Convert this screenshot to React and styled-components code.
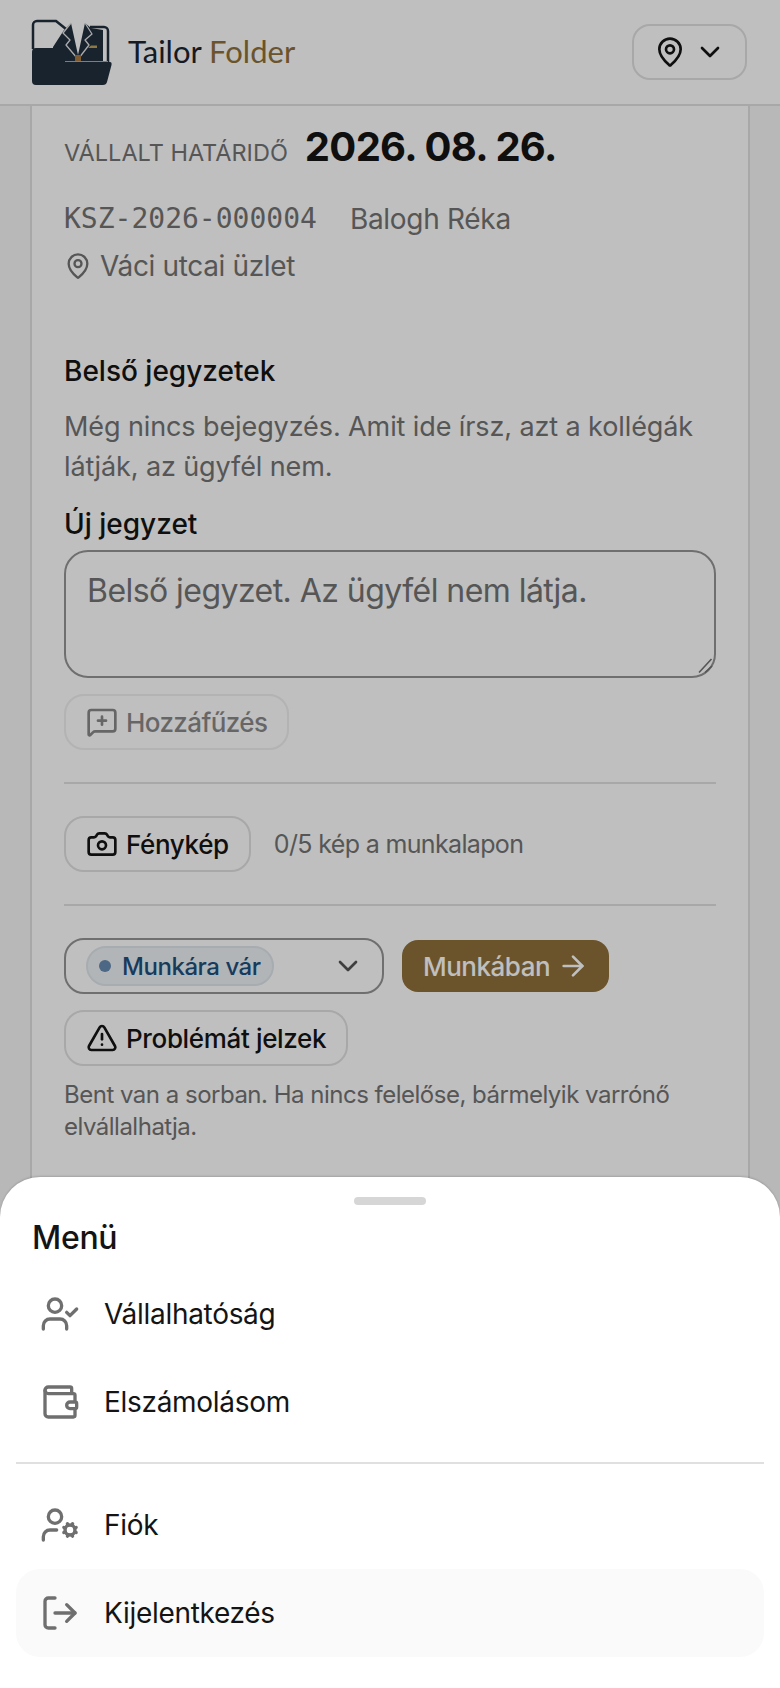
import React from 'react';
import styled, { createGlobalStyle } from 'styled-components';
import {
    ArrowRight,
    Camera,
    ChevronDown,
    LogOut,
    MapPin,
    MessageSquarePlus,
    TriangleAlert,
    UserCheck,
    UserCog,
    Wallet
} from 'lucide-react';

const colors = {
    INK: '#141414',
    MUTED: '#737373',
    LINE: '#e0e0e0',
    FIELD: '#949494',
    BRONZE: '#8f6f3a',
    NAVY: '#1f4f7d'
}

const menuGroups = [
    [
        { label: 'Vállalhatóság', Icon: UserCheck },
        { label: 'Elszámolásom', Icon: Wallet }
    ],
    [
        { label: 'Fiók', Icon: UserCog },
        { label: 'Kijelentkezés', Icon: LogOut, active: true }
    ]
]

const Logo = () => (
    <svg width="88" height="72" viewBox="0 0 88 72">
        <path d="M5 33V9a4 4 0 0 1 4-4h19l10 8" fill="none" stroke="#222f3e" strokeWidth="2.5" />
        <path d="M62 11h14a4 4 0 0 1 4 4v34" fill="none" stroke="#222f3e" strokeWidth="2.5" />
        <path d="M25 31L36 14l7-7 7 32 7-32 6 5 12 2v36H25z" fill="#222f3e" />
        <path d="M4 36q0-4 4-4h17l3-2 9 16h45q2 0 1.5 3L79 66q-.8 3-4 3H8q-4 0-4-4z" fill="#222f3e" />
        <path d="M43 7l-8 10 7 7-4 5 11 13" fill="none" stroke="#e4e4e4" strokeWidth="1.3" strokeLinejoin="round" />
        <path d="M57 7l7 11-7 6 4 5-10 13" fill="none" stroke="#e4e4e4" strokeWidth="1.3" strokeLinejoin="round" />
        <path d="M37 45.5h43" stroke="#a8a8a8" strokeWidth="1.2" />
        <path d="M60 32l3-2.5h6v2.500z" fill="#b8a25c" />
        <rect x="47" y="39" width="6" height="6" fill="#ab7a42" />
    </svg>
)

const App = () => (
    <Screen>
        <GlobalStyle />
        <Header>
            <Brand>
                <Logo />
                <BrandName>Tailor <BrandAccent>Folder</BrandAccent></BrandName>
            </Brand>
            <LocationButton>
                <MapPin size={32} strokeWidth={2} />
                <ChevronDown size={32} strokeWidth={2} />
            </LocationButton>
        </Header>
        <Page>
            <Card>
                <DeadlineRow>
                    <DeadlineLabel>VÁLLALT HATÁRIDŐ</DeadlineLabel>
                    <DeadlineDate>2026. 08. 26.</DeadlineDate>
                </DeadlineRow>
                <MetaRow>
                    <OrderCode>KSZ-2026-000004</OrderCode>
                    <span>Balogh Réka</span>
                </MetaRow>
                <ShopRow>
                    <MapPin size={28} strokeWidth={2} />
                    <span>Váci utcai üzlet</span>
                </ShopRow>

                <SectionTitle>Belső jegyzetek</SectionTitle>
                <SectionText>Még nincs bejegyzés. Amit ide írsz, azt a kollégák látják, az ügyfél nem.</SectionText>
                <FieldLabel htmlFor="note">Új jegyzet</FieldLabel>
                <NoteField>
                    <NoteInput id="note" placeholder="Belső jegyzet. Az ügyfél nem látja." />
                    <ResizeGrip width="16" height="16" viewBox="0 0 16 16">
                        <path d="M1 14.500L13.500 1M7 14.500l7-6.500" stroke="#727272" strokeWidth="1.600" fill="none" />
                    </ResizeGrip>
                </NoteField>
                <ActionButton disabled>
                    <MessageSquarePlus size={32} strokeWidth={2} />
                    Hozzáfűzés
                </ActionButton>

                <Divider />

                <PhotoRow>
                    <ActionButton>
                        <Camera size={32} strokeWidth={2} />
                        Fénykép
                    </ActionButton>
                    <PhotoCount>0/5 kép a munkalapon</PhotoCount>
                </PhotoRow>

                <Divider />

                <StatusRow>
                    <StatusSelect>
                        <StatusPill>
                            <StatusDot />
                            Munkára vár
                        </StatusPill>
                        <ChevronDown size={32} strokeWidth={2} color="#555" />
                    </StatusSelect>
                    <NextButton>
                        Munkában
                        <ArrowRight size={32} strokeWidth={2} />
                    </NextButton>
                </StatusRow>
                <ActionButton>
                    <TriangleAlert size={32} strokeWidth={2} />
                    Problémát jelzek
                </ActionButton>
                <HelpText>Bent van a sorban. Ha nincs felelőse, bármelyik varrónő elvállalhatja.</HelpText>
            </Card>
        </Page>
        <Backdrop />
        <Sheet>
            <Handle />
            <SheetTitle>Menü</SheetTitle>
            {menuGroups.map((group, i) => (
                <MenuGroup key={i} $separated={i > 0}>
                    {group.map(({ label, Icon, active }) => (
                        <MenuItem key={label} $active={active}>
                            <Icon size={40} strokeWidth={2} color="#6f6f6f" />
                            {label}
                        </MenuItem>
                    ))}
                </MenuGroup>
            ))}
        </Sheet>
    </Screen>
)

const GlobalStyle = createGlobalStyle`
    html, body {
        margin: 0;
        padding: 0;
    }
    body {
        font-family: Inter, "Noto Sans", sans-serif;
        color: ${colors.INK};
    }
    * {
        box-sizing: border-box;
    }
`

const Screen = styled.div`
    position: relative;
    width: 780px;
    height: 1688px;
    overflow: hidden;
    background: #f6f6f6;
`

const Header = styled.header`
    height: 106px;
    display: flex;
    align-items: center;
    justify-content: space-between;
    padding: 0 33px 0 28px;
    background: #fff;
    border-bottom: 2px solid ${colors.LINE};
`

const Brand = styled.div`
    display: flex;
    align-items: center;
    gap: 12px;
`

const BrandName = styled.span`
    margin-bottom: 3px;
    font-family: Lato, sans-serif;
    font-size: 31px;
    font-weight: 400;
    color: #1c2530;
`

const BrandAccent = styled.span`
    color: ${colors.BRONZE};
`

const LocationButton = styled.button`
    width: 115px;
    height: 56px;
    display: flex;
    align-items: center;
    justify-content: center;
    gap: 8px;
    padding: 0;
    background: transparent;
    color: ${colors.INK};
    border: 2px solid ${colors.LINE};
    border-radius: 18px;
`

const Page = styled.main`
    padding: 0 30px;
`

const Card = styled.section`
    display: flex;
    flex-direction: column;
    align-items: flex-start;
    height: 1400px;
    padding: 16px 32px;
    background: #fff;
    border-left: 2px solid ${colors.LINE};
    border-right: 2px solid ${colors.LINE};
`

const DeadlineRow = styled.div`
    display: flex;
    align-items: baseline;
    gap: 17px;
    height: 48px;
`

const DeadlineLabel = styled.span`
    font-size: 23.5px;
    color: ${colors.MUTED};
`

const DeadlineDate = styled.span`
    font-size: 40px;
    font-weight: 700;
    letter-spacing: -0.7px;
    color: ${colors.INK};
`

const MetaRow = styled.div`
    display: flex;
    align-items: center;
    gap: 33px;
    margin-top: 29px;
    font-size: 28px;
    letter-spacing: -0.3px;
    line-height: 40px;
    color: ${colors.MUTED};
`

const OrderCode = styled.span`
    font-family: "DejaVu Sans Mono", monospace;
    font-size: 28px;
    letter-spacing: 0;
`

const ShopRow = styled.div`
    display: flex;
    align-items: center;
    gap: 8px;
    margin-top: 7px;
    font-size: 28px;
    letter-spacing: -0.35px;
    line-height: 40px;
    color: ${colors.MUTED};
`

const SectionTitle = styled.h3`
    margin: 65px 0 0;
    font-size: 28px;
    font-weight: 500;
    line-height: 40px;
`

const SectionText = styled.p`
    margin: 16px 0 0;
    font-size: 27px;
    letter-spacing: -0.1px;
    line-height: 40px;
    color: ${colors.MUTED};
`

const FieldLabel = styled.label`
    margin-top: 17px;
    font-size: 28px;
    font-weight: 500;
    line-height: 40px;
`

const NoteField = styled.div`
    position: relative;
    width: 100%;
    height: 128px;
    margin-top: 6px;
`

const NoteInput = styled.textarea`
    display: block;
    width: 100%;
    height: 100%;
    padding: 17px 21px;
    font-family: Inter, sans-serif;
    font-size: 32px;
    letter-spacing: -0.55px;
    line-height: 44px;
    background: transparent;
    border: 2px solid ${colors.FIELD};
    border-radius: 24px;
    resize: none;
    &::placeholder {
        color: ${colors.MUTED};
        opacity: 1;
    }
`

const ResizeGrip = styled.svg`
    position: absolute;
    right: 2px;
    bottom: 4px;
`

const ActionButton = styled.button`
    display: inline-flex;
    align-items: center;
    gap: 8px;
    height: 56px;
    margin-top: ${({ disabled }) => disabled ? '16px' : '0'};
    padding: 0 20px;
    font-family: Inter, sans-serif;
    font-size: 26px;
    font-weight: 500;
    letter-spacing: ${({ disabled }) => disabled ? '-0.6px' : '-0.35px'};
    color: ${colors.INK};
    background: transparent;
    border: 2px solid ${colors.LINE};
    border-radius: 20px;
    opacity: ${({ disabled }) => disabled ? 0.5 : 1};
`

const Divider = styled.hr`
    width: 100%;
    margin: 32px 0;
    border: 0;
    border-top: 2px solid ${colors.LINE};
`

const PhotoRow = styled.div`
    display: flex;
    align-items: center;
    gap: 23px;
`

const PhotoCount = styled.span`
    font-size: 25px;
    letter-spacing: -0.65px;
    color: ${colors.MUTED};
`

const StatusRow = styled.div`
    display: flex;
    align-items: center;
    gap: 18px;
    margin-bottom: 16px;
`

const StatusSelect = styled.div`
    width: 320px;
    height: 56px;
    display: flex;
    align-items: center;
    justify-content: space-between;
    padding: 0 18px 0 20px;
    border: 2px solid ${colors.FIELD};
    border-radius: 20px;
`

const StatusPill = styled.span`
    display: inline-flex;
    align-items: center;
    gap: 11px;
    height: 40px;
    padding: 0 11px;
    font-size: 24px;
    font-weight: 500;
    letter-spacing: -0.45px;
    color: ${colors.NAVY};
    background: #edf2f6;
    border: 2px solid #dfe6ec;
    border-radius: 20px;
`

const StatusDot = styled.span`
    width: 12px;
    height: 12px;
    border-radius: 50%;
    background: #668bb0;
`

const NextButton = styled.button`
    display: inline-flex;
    align-items: center;
    gap: 7px;
    height: 52px;
    padding: 0 20px 0 21px;
    font-family: Inter, sans-serif;
    font-size: 26px;
    font-weight: 500;
    letter-spacing: -0.5px;
    color: #fff;
    background: ${colors.BRONZE};
    border: 0;
    border-radius: 16px;
`

const HelpText = styled.p`
    margin: 13px 0 0;
    font-size: 24px;
    letter-spacing: -0.5px;
    line-height: 32px;
    color: ${colors.MUTED};
`

const Backdrop = styled.div`
    position: absolute;
    inset: 0;
    background: rgba(0, 0, 0, 0.25);
`

const Sheet = styled.div`
    position: absolute;
    left: 0;
    right: 0;
    bottom: 0;
    height: 511px;
    padding: 20px 16px 0;
    background: #fff;
    border-radius: 40px 40px 0 0;
    box-shadow: 0 -1px 2px rgba(0, 0, 0, 0.15);
`

const Handle = styled.div`
    width: 72px;
    height: 8px;
    margin: 0 auto;
    border-radius: 4px;
    background: #d6d6d6;
`

const SheetTitle = styled.h2`
    margin: 11px 16px 10px;
    font-size: 32px;
    font-weight: 500;
    letter-spacing: -0.3px;
    line-height: 44px;
`

const MenuGroup = styled.div`
    display: flex;
    flex-direction: column;
    ${({ $separated }) => $separated && `
        margin-top: 16px;
        padding-top: 17px;
        border-top: 2px solid ${colors.LINE};
    `}
`

const MenuItem = styled.div`
    display: flex;
    align-items: center;
    gap: 24px;
    height: 88px;
    padding: 0 24px;
    font-size: 28px;
    letter-spacing: -0.3px;
    border-radius: 24px;
    color: ${colors.INK};
    background: ${({ $active }) => $active ? '#fafafa' : 'transparent'};
`

export default App;
